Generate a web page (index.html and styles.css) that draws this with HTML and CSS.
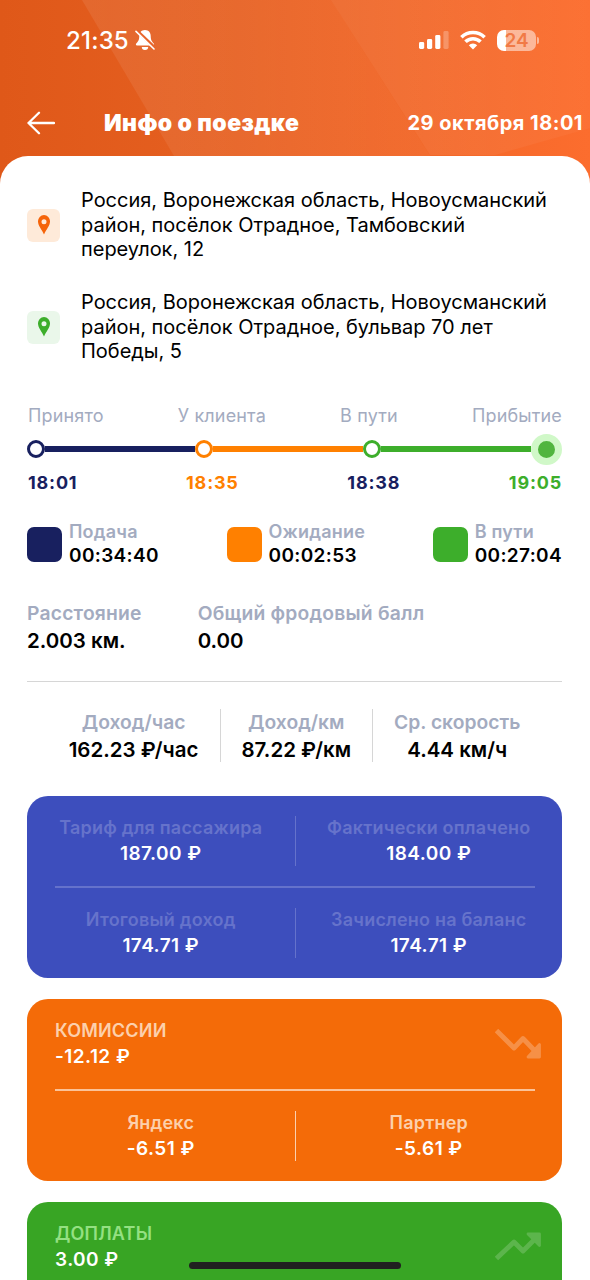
FILE: index.html
```
<!DOCTYPE html>
<html lang="ru">
<head>
    <meta charset="UTF-8">
    <meta name="viewport" content="width=device-width, initial-scale=1.0">
    <title>Инфо о поездке</title>
    <link rel="stylesheet" href="styles.css">
</head>
<body>

    <div class="screen">
        <svg class="backdrop" viewBox="0 0 590 200" preserveAspectRatio="none">
            <defs>
                <linearGradient id="base" x1="0" y1="0" x2="1" y2="0">
                    <stop offset="0" stop-color="#df5819"/>
                    <stop offset="0.35" stop-color="#e55f20"/>
                    <stop offset="1" stop-color="#fc6d2e"/>
                </linearGradient>
                <linearGradient id="shine" x1="0" y1="0" x2="1" y2="0">
                    <stop offset="0" stop-color="#fff" stop-opacity="0.08"/>
                    <stop offset="1" stop-color="#fff" stop-opacity="0.03"/>
                </linearGradient>
            </defs>
            <rect width="590" height="200" fill="url(#base)"/>
            <path d="M82 0 H331 L458 200 H200 Z" fill="url(#shine)"/>
            <path d="M331 0 H590 V128 L495 155 H430 Z" fill="url(#shine)"/>
        </svg>

        <div class="status-bar">
            <div class="clock">
                <span>21:35</span>
                <svg width="20" height="22" viewBox="0 0 20 22">
                    <path d="M10 1 C6.2 1 4.3 3.8 4.3 7 C4.3 11.5 2.8 12.8 1.2 14.6 C.6 15.5 .9 16.6 2 16.6 H18 C19.1 16.6 19.4 15.5 18.8 14.6 C17.2 12.8 15.7 11.5 15.7 7 C15.7 3.8 13.8 1 10 1 Z M6.8 18 H13.2 A3.2 3 0 0 1 6.8 18 Z" fill="#fff"/>
                    <path d="M1.8 1.6 L19.6 18.6" stroke="#e8652c" stroke-width="3.2"/>
                    <path d="M1 2.4 L19 20" stroke="#fff" stroke-width="1.6" stroke-linecap="round"/>
                </svg>
            </div>
            <div class="indicators">
                <svg width="30" height="20" viewBox="0 0 30 20" fill="#fff">
                    <rect x="0" y="12" width="5.2" height="7" rx="1.4"/>
                    <rect x="8" y="9" width="5.2" height="10" rx="1.4"/>
                    <rect x="16.2" y="5" width="5.2" height="14" rx="1.4"/>
                    <rect x="24.4" y="1" width="5.2" height="18" rx="1.4" opacity="0.25"/>
                </svg>
                <svg width="26" height="20" viewBox="0 0 26 20" fill="none" stroke="#fff" stroke-width="3.6">
                    <path d="M1.4 7.2 A16.6 16.6 0 0 1 24.6 7.2"/>
                    <path d="M5.5 11.8 A10.6 10.6 0 0 1 20.5 11.8"/>
                    <path d="M13 19.4 L8.8 15.3 A5.8 5.8 0 0 1 17.2 15.3 Z" fill="#fff" stroke="none"/>
                </svg>
                <div class="battery"><span class="battery-level">24</span></div>
            </div>
        </div>

        <div class="top-bar">
            <svg width="28" height="24" viewBox="0 0 28 24" fill="none" stroke="#fff" stroke-width="2.3" stroke-linecap="round" stroke-linejoin="round">
                <path d="M27 12 H1.5 M12 1.8 L1.5 12 L12 22.2"/>
            </svg>
            <h1>Инфо о поездке</h1>
            <span class="date">29 октября 18:01</span>
        </div>

        <div class="sheet">
            <div class="address">
                <div class="pin pin-orange">
                    <svg width="12" height="20" viewBox="0 0 12 20"><path fill-rule="evenodd" d="M6 0 A6 6.2 0 0 0 0 6.4 C0 10.6 4 14.8 6 19.4 C8 14.8 12 10.6 12 6.4 A6 6.2 0 0 0 6 0 Z M6 4.2 A2.5 2.5 0 1 1 6 9.2 A2.5 2.5 0 1 1 6 4.2 Z"/></svg>
                </div>
                <p>Россия, Воронежская область, Новоусманский<br>район, посёлок Отрадное, Тамбовский<br>переулок, 12</p>
            </div>
            <div class="address">
                <div class="pin pin-green">
                    <svg width="12" height="20" viewBox="0 0 12 20"><path fill-rule="evenodd" d="M6 0 A6 6.2 0 0 0 0 6.4 C0 10.6 4 14.8 6 19.4 C8 14.8 12 10.6 12 6.4 A6 6.2 0 0 0 6 0 Z M6 4.2 A2.5 2.5 0 1 1 6 9.2 A2.5 2.5 0 1 1 6 4.2 Z"/></svg>
                </div>
                <p>Россия, Воронежская область, Новоусманский<br>район, посёлок Отрадное, бульвар 70 лет<br>Победы, 5</p>
            </div>

            <div class="steps step-names">
                <span>Принято</span>
                <span>У клиента</span>
                <span>В пути</span>
                <span>Прибытие</span>
            </div>
            <div class="track">
                <i class="dot navy"></i>
                <i class="line navy"></i>
                <i class="dot orange"></i>
                <i class="line orange"></i>
                <i class="dot green"></i>
                <i class="line green"></i>
                <i class="finish"></i>
            </div>
            <div class="steps step-times">
                <span class="navy">18:01</span>
                <span class="orange">18:35</span>
                <span class="navy">18:38</span>
                <span class="green">19:05</span>
            </div>

            <div class="legend">
                <div class="legend-item">
                    <i class="swatch navy"></i>
                    <div><span class="label">Подача</span><b>00:34:40</b></div>
                </div>
                <div class="legend-item">
                    <i class="swatch orange"></i>
                    <div><span class="label">Ожидание</span><b>00:02:53</b></div>
                </div>
                <div class="legend-item">
                    <i class="swatch green"></i>
                    <div><span class="label">В пути</span><b>00:27:04</b></div>
                </div>
            </div>

            <div class="facts">
                <div><span class="label">Расстояние</span><b>2.003 км.</b></div>
                <div><span class="label">Общий фродовый балл</span><b>0.00</b></div>
            </div>

            <div class="rates">
                <div><span class="label">Доход/час</span><b>162.23 ₽/час</b></div>
                <div><span class="label">Доход/км</span><b>87.22 ₽/км</b></div>
                <div><span class="label">Ср. скорость</span><b>4.44 км/ч</b></div>
            </div>

            <div class="card card-blue">
                <div class="pair">
                    <div><span>Тариф для пассажира</span><b>187.00 ₽</b></div>
                    <div><span>Фактически оплачено</span><b>184.00 ₽</b></div>
                </div>
                <hr>
                <div class="pair">
                    <div><span>Итоговый доход</span><b>174.71 ₽</b></div>
                    <div><span>Зачислено на баланс</span><b>174.71 ₽</b></div>
                </div>
            </div>

            <div class="card card-orange">
                <div class="total">
                    <div><span>КОМИССИИ</span><b>-12.12 ₽</b></div>
                    <svg width="46" height="30" viewBox="0 0 46 30" fill="none" stroke="#fff" stroke-width="4.8" stroke-linejoin="round">
                        <path d="M1.5 1.5 L19 19 L28 9.5 L39 21"/>
                        <path d="M44.5 15.5 V28 H33 Z" fill="#fff" stroke-width="2.8"/>
                    </svg>
                </div>
                <hr>
                <div class="pair">
                    <div><span>Яндекс</span><b>-6.51 ₽</b></div>
                    <div><span>Партнер</span><b>-5.61 ₽</b></div>
                </div>
            </div>

            <div class="card card-green">
                <div class="total">
                    <div><span>ДОПЛАТЫ</span><b>3.00 ₽</b></div>
                    <svg width="46" height="30" viewBox="0 0 46 30" fill="none" stroke="#fff" stroke-width="4.8" stroke-linejoin="round">
                        <path d="M1.5 26.5 L19 10 L28 19 L39 8"/>
                        <path d="M44.5 13.5 V2 H33 Z" fill="#fff" stroke-width="2.8"/>
                    </svg>
                </div>
            </div>
        </div>

        <div class="home-indicator"></div>
    </div>

</body>
</html>
```
FILE: styles.css
```
* {
    box-sizing: border-box;
}

body {
    margin: 0;
    font-family: Inter, "Liberation Sans", sans-serif;
    color: #000;
    background-color: #fff;
}

.screen {
    position: relative;
    width: 590px;
    height: 1280px;
    overflow: hidden;
}

.backdrop {
    position: absolute;
    top: 0;
    left: 0;
    width: 590px;
    height: 200px;
}

.status-bar,
.top-bar,
.sheet {
    position: relative;
}

.status-bar {
    display: flex;
    justify-content: space-between;
    height: 80px;
    padding: 0 54px 0 66px;
    color: #fff;
}

.clock,
.indicators {
    display: flex;
    align-items: center;
}

.clock {
    gap: 6px;
    font-size: 24px;
    font-weight: 500;
    letter-spacing: 0.2px;
}

.indicators {
    gap: 11px;
}

.battery {
    position: relative;
    width: 39px;
    height: 21px;
    border-radius: 7px;
    background: linear-gradient(to right, #fff 9px, rgba(255, 255, 255, 0.5) 9px);
    color: #f17a46;
    font-size: 19px;
    font-weight: 600;
    line-height: 21px;
    text-align: center;
}

.battery::after {
    content: "";
    position: absolute;
    top: 7px;
    right: -3px;
    width: 2px;
    height: 7px;
    border-radius: 0 2px 2px 0;
    background-color: rgba(255, 255, 255, 0.5);
}

.top-bar {
    display: flex;
    align-items: center;
    height: 85px;
    padding: 0 7px 0 27px;
    color: #fff;
}

.top-bar h1 {
    margin: 0 auto 0 49px;
    font-size: 23px;
    font-weight: 900;
    letter-spacing: 0.4px;
}

.date {
    font-size: 20px;
    font-weight: 700;
    letter-spacing: 0.5px;
}

.sheet {
    height: 1200px;
    margin-top: -9px;
    padding: 32px 28px 0 27px;
    border-radius: 28px 28px 0 0;
    background-color: #fff;
}

.address {
    display: flex;
    align-items: center;
    height: 74px;
    margin-bottom: 28px;
}

.address p {
    margin: 0 0 0 21px;
    font-size: 20px;
    line-height: 24.5px;
    letter-spacing: -0.02px;
    white-space: nowrap;
}

.pin {
    display: flex;
    align-items: center;
    justify-content: center;
    width: 33px;
    height: 33px;
    border-radius: 6px;
}

.pin-orange {
    background-color: #feead9;
    fill: #f5640a;
}

.pin-green {
    background-color: #eaf7ea;
    fill: #3dae2b;
}

.steps {
    display: flex;
    justify-content: space-between;
    padding-left: 1px;
}

.step-names {
    height: 24px;
    margin-top: 40px;
    color: #a3abc0;
    font-size: 18px;
    line-height: 24px;
    letter-spacing: 0.15px;
}

.track {
    display: flex;
    align-items: center;
    height: 32px;
    margin-top: 5px;
}

.dot {
    width: 18px;
    height: 18px;
    border: 3px solid;
    border-radius: 50%;
}

.line {
    flex: 1;
    height: 6px;
    background-color: currentColor;
}

.finish {
    width: 31px;
    height: 31px;
    border: 7px solid #d0f8c8;
    border-radius: 50%;
    background-color: #51b53f;
}

.navy {
    color: #18205f;
}

.orange {
    color: #ff8000;
}

.green {
    color: #3dae2b;
}

.step-times {
    margin-top: 6px;
    font-size: 18px;
    font-weight: 700;
    line-height: 24px;
    letter-spacing: 0.8px;
}

.legend {
    display: flex;
    justify-content: space-between;
    margin-top: 25px;
}

.legend-item {
    display: flex;
    align-items: center;
    gap: 7px;
    font-size: 18px;
    line-height: 24px;
}

.legend-item b {
    font-size: 19px;
    letter-spacing: 0.35px;
}

.swatch {
    width: 35px;
    height: 35px;
    border-radius: 7px;
    background-color: currentColor;
}

.label,
.legend b,
.facts b,
.rates b,
.card span,
.card b {
    display: block;
    font-weight: 600;
}

.label {
    color: #a3abc0;
    letter-spacing: 0.2px;
}

.facts,
.rates {
    font-size: 20.5px;
    line-height: 28px;
}

.facts .label,
.rates .label {
    font-size: 19.3px;
}

.facts {
    display: flex;
    gap: 56px;
    height: 114px;
    padding-top: 31px;
    border-bottom: 1px solid #d6d6d6;
}

.rates {
    display: flex;
    justify-content: center;
    height: 53px;
    margin-top: 27px;
    text-align: center;
}

.rates div {
    padding: 0 21px;
}

.rates .label {
    margin-top: -1px;
    letter-spacing: 0;
}

.rates div + div {
    border-left: 1px solid #d6d6d6;
}

.card {
    height: 182px;
    padding: 20px 27px 0 28px;
    border-radius: 21px;
    color: #fff;
    font-size: 18px;
    line-height: 26px;
}

.card + .card {
    margin-top: 21px;
}

.card span {
    margin-top: -1px;
    letter-spacing: 0.2px;
}

.card b {
    font-size: 19px;
    letter-spacing: 0.45px;
}

.card hr {
    height: 2px;
    margin: 20px 0;
    border: 0;
    background-color: currentColor;
}

.pair {
    display: grid;
    grid-template-columns: 1fr 1fr;
    grid-template-rows: 50px;
    margin: 0 -27px 0 -28px;
    text-align: center;
}

.pair div + div {
    border-left: 1px solid;
}

.total {
    display: flex;
    justify-content: space-between;
    height: 50px;
}

.total svg {
    margin: 10px -6px 0 0;
    opacity: 0.25;
}

.card-blue {
    margin-top: 34px;
    background-color: #3d4ebd;
}

.card-blue span {
    color: #6673cb;
}

.card-blue hr {
    background-color: #6572cb;
}

.card-blue .pair div {
    border-color: #6572cb;
}

.card-orange {
    background-color: #f46b08;
}

.card-orange span {
    color: #fcd0ac;
}

.card-orange hr {
    background-color: #fbc298;
}

.card-orange .pair div {
    border-color: #fbd0b0;
}

.card-green {
    background-color: #38a524;
}

.card-green span {
    color: #94e082;
}

.card-green svg {
    opacity: 0.18;
}

.home-indicator {
    position: absolute;
    left: 189px;
    bottom: 11px;
    width: 212px;
    height: 7px;
    border-radius: 4px;
    background-color: #202020;
}
```
